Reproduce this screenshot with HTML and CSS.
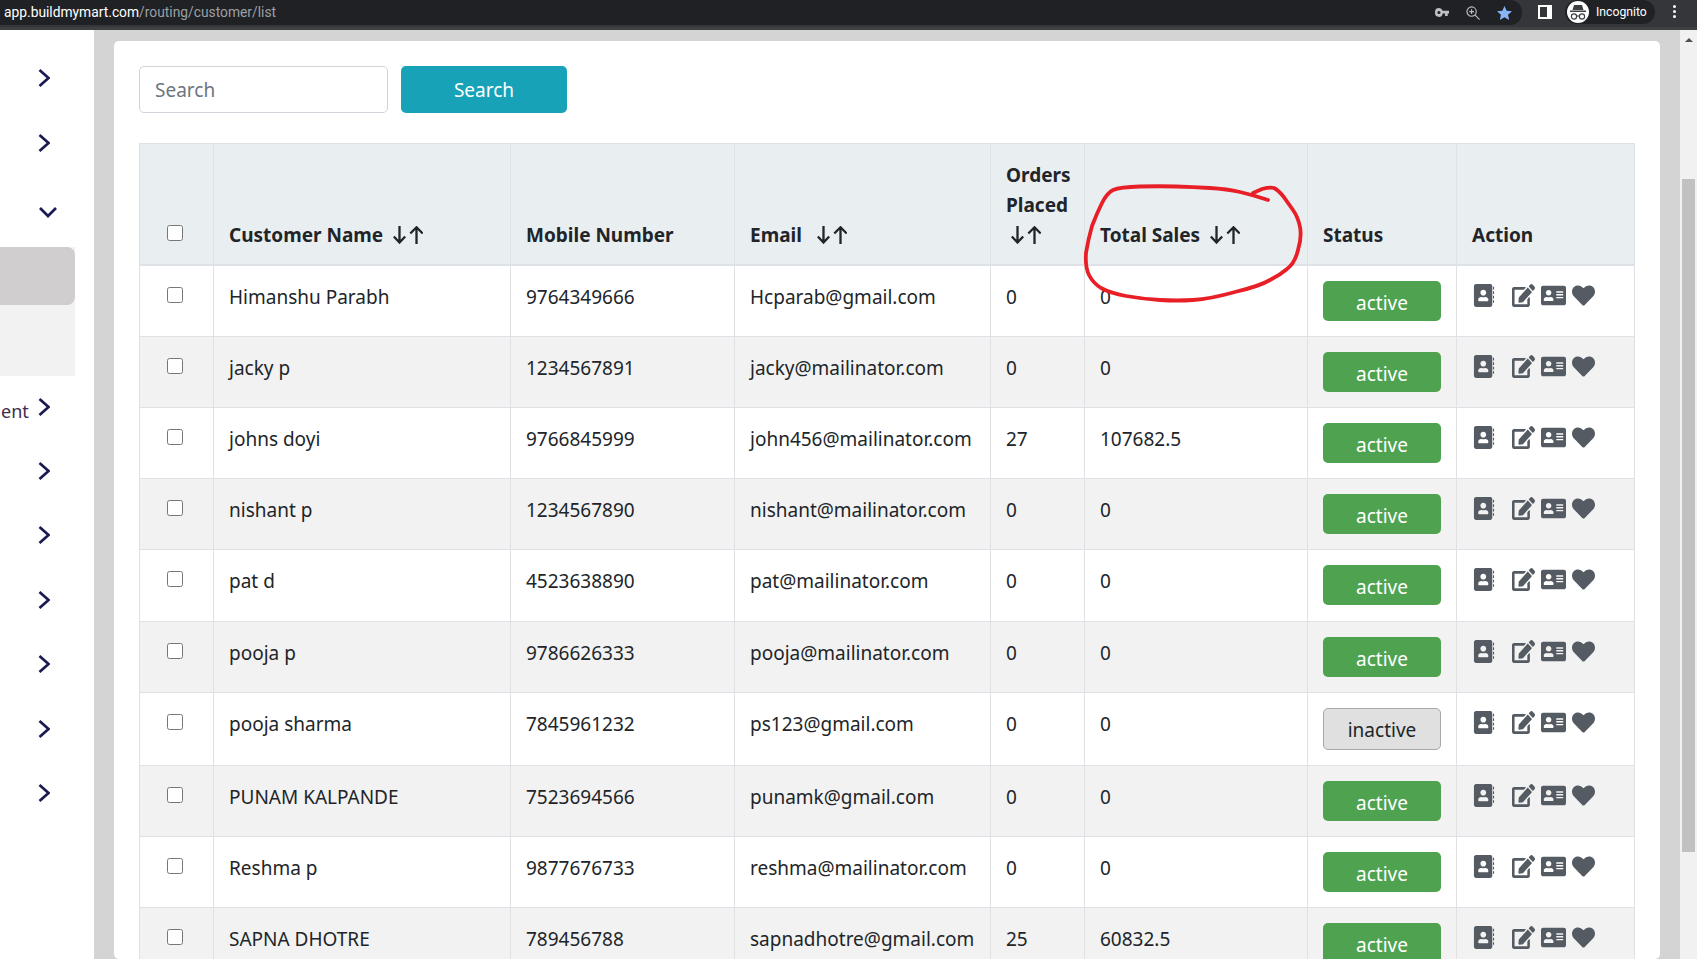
FILE: index.html
```html
<!DOCTYPE html>
<html lang="en">
<head>
    <meta charset="UTF-8">
    <title>Customer List</title>
    <link rel="stylesheet" href="styles.css">
</head>
<body>
    <svg class="icon-defs" aria-hidden="true">
        <symbol id="i-chevron" viewBox="0 0 12 18"><path d="M1.500 1 10.500 9 1.500 17" fill="none" stroke="currentColor" stroke-width="2.700"/></symbol>
        <symbol id="i-chevron-down" viewBox="0 0 18 12"><path d="M1 2 9 10 17 2" fill="none" stroke="currentColor" stroke-width="2.700"/></symbol>
        <symbol id="i-sort" viewBox="0 0 30 18"><path d="M6.500 0v16M.8 10.500 6.500 16.500 12.200 10.500M23.500 18V2M17.300 7.500 23.500 1.300 29.700 7.500" fill="none" stroke="currentColor" stroke-width="2.300"/></symbol>
        <symbol id="i-book" viewBox="0 0 448 512"><path d="M48 0h320c0 0 40 0 40 48v416c0 26.500-21.500 48-48 48H48c-26.500 0-48-21.500-48-48V48C0 21.500 21.500 0 48 0zm160 128c-35.300 0-64 28.700-64 64s28.700 64 64 64 64-28.700 64-64-28.700-64-64-64zm112 236.800v-19.200c0-31.800-30.100-57.600-67.200-57.600h-5c-12.300 5.100-25.700 8-39.800 8s-27.600-2.900-39.800-8h-5c-37.100 0-67.200 25.800-67.200 57.600v19.200c0 10.600 10 19.200 22.400 19.200h179.200c12.400 0 22.400-8.600 22.400-19.200z" fill-rule="evenodd"/><path d="M424 60h24v60h-24zM424 160h24v60h-24zM424 260h24v60h-24zM424 360h24v60h-24z"/></symbol>
        <symbol id="i-edit" viewBox="0 0 576 512" preserveAspectRatio="none"><path d="M402.600 83.200l90.200 90.200c3.800 3.800 3.800 10 0 13.800L274.400 405.600l-92.800 10.300c-12.400 1.400-22.900-9.100-21.500-21.500l10.300-92.800L388.800 83.200c3.800-3.800 10-3.800 13.800 0zm162-22.900l-48.800-48.800c-15.200-15.200-39.900-15.200-55.200 0l-35.400 35.400c-3.800 3.800-3.800 10 0 13.800l90.200 90.200c3.800 3.800 10 3.800 13.800 0l35.400-35.400c15.200-15.300 15.200-40 0-55.200zM384 346.200V448H64V128h229.800c3.200 0 6.200-1.300 8.500-3.500l40-40c7.600-7.600 2.200-20.500-8.500-20.500H48C21.500 64 0 85.500 0 112v352c0 26.500 21.500 48 48 48h352c26.500 0 48-21.500 48-48V306.200c0-10.700-12.900-16-20.500-8.500l-40 40c-2.200 2.300-3.500 5.300-3.500 8.500z"/></symbol>
        <symbol id="i-card" viewBox="0 0 576 512"><path d="M528 32H48C21.500 32 0 53.500 0 80v352c0 26.500 21.500 48 48 48h480c26.500 0 48-21.500 48-48V80c0-26.500-21.500-48-48-48zm-352 96c35.300 0 64 28.700 64 64s-28.700 64-64 64-64-28.700-64-64 28.700-64 64-64zm112 236.800c0 10.600-10 19.200-22.400 19.200H86.400C74 384 64 375.400 64 364.800v-19.200c0-31.800 30.100-57.600 67.200-57.600h5c12.300 5.100 25.700 8 39.800 8s27.600-2.900 39.800-8h5c37.100 0 67.200 25.800 67.200 57.600v19.200zM512 312c0 4.400-3.600 8-8 8H360c-4.400 0-8-3.600-8-8v-16c0-4.400 3.600-8 8-8h144c4.400 0 8 3.600 8 8v16zm0-64c0 4.400-3.600 8-8 8H360c-4.400 0-8-3.600-8-8v-16c0-4.400 3.600-8 8-8h144c4.400 0 8 3.600 8 8v16zm0-64c0 4.400-3.600 8-8 8H360c-4.400 0-8-3.600-8-8v-16c0-4.400 3.600-8 8-8h144c4.400 0 8 3.600 8 8v16z"/></symbol>
        <symbol id="i-heart" viewBox="0 0 512 512"><path d="M462.300 62.600C407.500 15.900 326 24.300 275.700 76.200L256 96.500l-19.700-20.300C186.100 24.300 104.500 15.900 49.700 62.600c-62.800 53.600-66.100 149.800-9.900 207.900l193.500 199.800c12.500 12.900 32.800 12.900 45.300 0l193.500-199.800c56.300-58.100 53-154.300-9.800-207.900z"/></symbol>
    </svg>

    <header class="topbar">
        <div class="omnibox">
            <div class="url"><span class="url-host">app.buildmymart.com</span>/routing/customer/list</div>
            <div class="omni-icons">
                <svg class="omni-icon" width="14" height="9" viewBox="0 0 16 10"><path d="M4.500 0a4.500 5 0 0 1 4.300 3H16v3h-1.500v3h-3V6H8.800a4.500 5 0 1 1-4.300-6zm0 3.200a1.800 1.800 0 1 0 0 3.600 1.800 1.800 0 0 0 0-3.600z" fill="#bdc1c6" fill-rule="evenodd"/></svg>
                <svg class="omni-icon" width="14" height="14" viewBox="0 0 15 15"><g fill="none" stroke="#bdc1c6" stroke-width="1.200"><circle cx="6" cy="6" r="5"/><path d="M9.800 9.800 14.500 14.500M3.500 6h5M6 3.500v5"/></g></svg>
                <svg class="omni-icon" width="15" height="14" viewBox="0 0 16 15"><path d="M8 0l2.300 5 5.700.6-4.200 3.700 1.200 5.700L8 12.100 3 15l1.200-5.700L0 5.600 5.700 5z" fill="#8ab4f8"/></svg>
            </div>
        </div>
        <div class="panel-icon"></div>
        <div class="profile">
            <span class="avatar">
                <svg width="18" height="16" viewBox="0 0 18 16"><path d="M3.500 6 5 1h8l1.500 5zM1 6.500h16V8H1z" fill="#3c4043"/><g fill="none" stroke="#3c4043" stroke-width="1.200"><circle cx="5" cy="12.500" r="2.600"/><circle cx="13" cy="12.500" r="2.600"/><path d="M7.500 12h3"/></g></svg>
            </span>
            <span class="profile-name">Incognito</span>
        </div>
        <div class="menu-dots"><i></i><i></i><i></i></div>
    </header>

    <div class="layout">
        <nav class="sidebar">
            <div class="nav-item"><svg class="chevron"><use href="#i-chevron"/></svg></div>
            <div class="nav-item"><svg class="chevron"><use href="#i-chevron"/></svg></div>
            <div class="nav-item nav-open"><svg class="chevron-down"><use href="#i-chevron-down"/></svg></div>
            <div class="submenu">
                <div class="sub-active"></div>
            </div>
            <div class="nav-item nav-label"><span class="nav-text">ent</span><svg class="chevron"><use href="#i-chevron"/></svg></div>
            <div class="nav-item"><svg class="chevron"><use href="#i-chevron"/></svg></div>
            <div class="nav-item"><svg class="chevron"><use href="#i-chevron"/></svg></div>
            <div class="nav-item"><svg class="chevron"><use href="#i-chevron"/></svg></div>
            <div class="nav-item"><svg class="chevron"><use href="#i-chevron"/></svg></div>
            <div class="nav-item"><svg class="chevron"><use href="#i-chevron"/></svg></div>
            <div class="nav-item"><svg class="chevron"><use href="#i-chevron"/></svg></div>
        </nav>

        <main class="content">
            <div class="card">
                <div class="search-row">
                    <input class="search-input" type="text" placeholder="Search">
                    <button class="search-button">Search</button>
                </div>
                <table class="customers">
                    <colgroup>
                        <col class="col-check"><col class="col-name"><col class="col-mobile"><col class="col-email">
                        <col class="col-orders"><col class="col-sales"><col class="col-status"><col class="col-action">
                    </colgroup>
                    <thead>
                        <tr>
                            <th><input type="checkbox"></th>
                            <th>Customer Name <svg class="sort"><use href="#i-sort"/></svg></th>
                            <th>Mobile Number</th>
                            <th>Email <svg class="sort sort-far"><use href="#i-sort"/></svg></th>
                            <th>Orders Placed <svg class="sort sort-wrapped"><use href="#i-sort"/></svg></th>
                            <th>Total Sales <svg class="sort"><use href="#i-sort"/></svg></th>
                            <th>Status</th>
                            <th>Action</th>
                        </tr>
                    </thead>
                    <tbody>
                        <tr>
                            <td><input type="checkbox"></td>
                            <td>Himanshu Parabh</td><td>9764349666</td><td>Hcparab@gmail.com</td><td>0</td><td>0</td>
                            <td><button class="status">active</button></td>
                            <td><div class="actions"><svg class="action-book"><use href="#i-book"/></svg><svg class="action-edit"><use href="#i-edit"/></svg><svg class="action-card"><use href="#i-card"/></svg><svg class="action-heart"><use href="#i-heart"/></svg></div></td>
                        </tr>
                        <tr>
                            <td><input type="checkbox"></td>
                            <td>jacky p</td><td>1234567891</td><td>jacky@mailinator.com</td><td>0</td><td>0</td>
                            <td><button class="status">active</button></td>
                            <td><div class="actions"><svg class="action-book"><use href="#i-book"/></svg><svg class="action-edit"><use href="#i-edit"/></svg><svg class="action-card"><use href="#i-card"/></svg><svg class="action-heart"><use href="#i-heart"/></svg></div></td>
                        </tr>
                        <tr>
                            <td><input type="checkbox"></td>
                            <td>johns doyi</td><td>9766845999</td><td>john456@mailinator.com</td><td>27</td><td>107682.5</td>
                            <td><button class="status">active</button></td>
                            <td><div class="actions"><svg class="action-book"><use href="#i-book"/></svg><svg class="action-edit"><use href="#i-edit"/></svg><svg class="action-card"><use href="#i-card"/></svg><svg class="action-heart"><use href="#i-heart"/></svg></div></td>
                        </tr>
                        <tr>
                            <td><input type="checkbox"></td>
                            <td>nishant p</td><td>1234567890</td><td>nishant@mailinator.com</td><td>0</td><td>0</td>
                            <td><button class="status">active</button></td>
                            <td><div class="actions"><svg class="action-book"><use href="#i-book"/></svg><svg class="action-edit"><use href="#i-edit"/></svg><svg class="action-card"><use href="#i-card"/></svg><svg class="action-heart"><use href="#i-heart"/></svg></div></td>
                        </tr>
                        <tr>
                            <td><input type="checkbox"></td>
                            <td>pat d</td><td>4523638890</td><td>pat@mailinator.com</td><td>0</td><td>0</td>
                            <td><button class="status">active</button></td>
                            <td><div class="actions"><svg class="action-book"><use href="#i-book"/></svg><svg class="action-edit"><use href="#i-edit"/></svg><svg class="action-card"><use href="#i-card"/></svg><svg class="action-heart"><use href="#i-heart"/></svg></div></td>
                        </tr>
                        <tr>
                            <td><input type="checkbox"></td>
                            <td>pooja p</td><td>9786626333</td><td>pooja@mailinator.com</td><td>0</td><td>0</td>
                            <td><button class="status">active</button></td>
                            <td><div class="actions"><svg class="action-book"><use href="#i-book"/></svg><svg class="action-edit"><use href="#i-edit"/></svg><svg class="action-card"><use href="#i-card"/></svg><svg class="action-heart"><use href="#i-heart"/></svg></div></td>
                        </tr>
                        <tr>
                            <td><input type="checkbox"></td>
                            <td>pooja sharma</td><td>7845961232</td><td>ps123@gmail.com</td><td>0</td><td>0</td>
                            <td><button class="status status-off">inactive</button></td>
                            <td><div class="actions"><svg class="action-book"><use href="#i-book"/></svg><svg class="action-edit"><use href="#i-edit"/></svg><svg class="action-card"><use href="#i-card"/></svg><svg class="action-heart"><use href="#i-heart"/></svg></div></td>
                        </tr>
                        <tr>
                            <td><input type="checkbox"></td>
                            <td>PUNAM KALPANDE</td><td>7523694566</td><td>punamk@gmail.com</td><td>0</td><td>0</td>
                            <td><button class="status">active</button></td>
                            <td><div class="actions"><svg class="action-book"><use href="#i-book"/></svg><svg class="action-edit"><use href="#i-edit"/></svg><svg class="action-card"><use href="#i-card"/></svg><svg class="action-heart"><use href="#i-heart"/></svg></div></td>
                        </tr>
                        <tr>
                            <td><input type="checkbox"></td>
                            <td>Reshma p</td><td>9877676733</td><td>reshma@mailinator.com</td><td>0</td><td>0</td>
                            <td><button class="status">active</button></td>
                            <td><div class="actions"><svg class="action-book"><use href="#i-book"/></svg><svg class="action-edit"><use href="#i-edit"/></svg><svg class="action-card"><use href="#i-card"/></svg><svg class="action-heart"><use href="#i-heart"/></svg></div></td>
                        </tr>
                        <tr>
                            <td><input type="checkbox"></td>
                            <td>SAPNA DHOTRE</td><td>789456788</td><td>sapnadhotre@gmail.com</td><td>25</td><td>60832.5</td>
                            <td><button class="status">active</button></td>
                            <td><div class="actions"><svg class="action-book"><use href="#i-book"/></svg><svg class="action-edit"><use href="#i-edit"/></svg><svg class="action-card"><use href="#i-card"/></svg><svg class="action-heart"><use href="#i-heart"/></svg></div></td>
                        </tr>
                    </tbody>
                </table>
            </div>
        </main>

        <div class="scrollbar">
            <span class="scroll-up"></span>
            <div class="scroll-thumb"></div>
        </div>
    </div>

    <svg class="scribble" viewBox="0 0 1697 959" aria-hidden="true">
        <path d="M1268 200 Q1253 195 1240 192 Q1227 189 1210 188 Q1193 187 1176 186.500 Q1160 186 1140 186.500 Q1120 187 1113 190 Q1107 193 1102 203 Q1097 213 1092 226 Q1088 240 1086 253 Q1085 267 1089 275 Q1093 283 1101 288 Q1110 293 1126 296 Q1143 299 1160 300 Q1177 301 1193 300 Q1210 299 1235 292 Q1260 286 1270 280 Q1280 275 1287 269 Q1295 263 1298 250 Q1302 237 1300 227 Q1298 217 1293 210 Q1288 203 1283 196 Q1278 190 1274 188 Q1270 187 1262 189 L1253 193"/>
    </svg>
</body>
</html>
```

FILE: styles.css
```css
* {
    box-sizing: border-box;
}

html, body {
    margin: 0;
    height: 100%;
    overflow: hidden;
}

body {
    background-color: #d4d4d4;
    color: #212529;
    font-family: 'Noto Sans', sans-serif;
    font-size: 19px;
    display: flex;
    flex-direction: column;
}

.icon-defs {
    display: none;
}

/* browser chrome */
.topbar {
    height: 30px;
    flex-shrink: 0;
    background-color: #35363a;
    border-bottom: 3px solid #3f4043;
    display: flex;
    align-items: flex-start;
    color: #fff;
    font-family: Roboto, sans-serif;
}

.omnibox {
    width: 1522px;
    height: 25px;
    background-color: #202124;
    border-radius: 0 12px 12px 0;
    display: flex;
    align-items: center;
    justify-content: space-between;
    padding: 0 10px 0 4px;
}

.url {
    font-size: 13.800px;
    color: #9aa0a6;
    padding-bottom: 2px;
}

.url-host {
    color: #fff;
}

.omni-icons {
    display: flex;
    align-items: center;
    gap: 17px;
}

.panel-icon {
    width: 14px;
    height: 14px;
    margin: 5px 0 0 16px;
    background-color: #35363a;
    border: 2px solid #fff;
    border-right-width: 5px;
}

.profile {
    width: 90px;
    height: 24px;
    margin-left: 13px;
    background-color: #202124;
    border-radius: 12px;
    display: flex;
    align-items: center;
    gap: 7px;
    padding-left: 2px;
}

.avatar {
    width: 22px;
    height: 22px;
    border-radius: 50%;
    background-color: #fff;
    display: flex;
    align-items: center;
    justify-content: center;
}

.profile-name {
    font-size: 12.200px;
}

.menu-dots {
    margin: 5px 0 0 18px;
    display: flex;
    flex-direction: column;
    gap: 2px;
}

.menu-dots i {
    width: 3px;
    height: 3px;
    border-radius: 50%;
    background-color: #fff;
}

.layout {
    flex: 1;
    min-height: 0;
    display: flex;
}

/* left menu, cut off by the screenshot */
.sidebar {
    width: 94px;
    flex-shrink: 0;
    background-color: #fff;
    color: #1c1a55;
    padding-top: 16px;
    overflow: hidden;
}

.nav-item {
    height: 64.400px;
    display: flex;
    align-items: center;
    justify-content: flex-end;
    padding-right: 44px;
}

.nav-open {
    margin-top: 5px;
    padding-right: 37px;
    padding-bottom: 3px;
    height: 67px;
}

.chevron {
    width: 12px;
    height: 18px;
}

.chevron-down {
    width: 18px;
    height: 12px;
}

.submenu {
    width: 75px;
    height: 129px;
    background-color: #f2f2f2;
}

.sub-active {
    height: 58px;
    background-color: #d0cece;
    border-radius: 0 8px 8px 0;
}

.nav-label {
    height: 64px;
    margin-top: -1px;
    justify-content: space-between;
}

.nav-text {
    color: #3d2c4e;
    font-size: 18px;
    padding: 8px 0 0 1px;
}

.content {
    flex: 1;
    min-width: 0;
    padding: 11px 20px 0;
    overflow: hidden;
}

.card {
    background-color: #fff;
    border-radius: 5px;
    padding: 25px;
    height: 100%;
    overflow: hidden;
}

.search-row {
    display: flex;
    gap: 13px;
    margin-bottom: 30px;
}

.search-input {
    width: 249px;
    height: 47px;
    padding: 0 15px;
    border: 1px solid #ced4da;
    border-radius: 5px;
    font-family: inherit;
    font-size: 19px;
    color: #495057;
}

.search-input::placeholder {
    color: #6c757d;
}

.search-button {
    width: 166px;
    height: 47px;
    background-color: #17a2b8;
    border: none;
    border-radius: 5px;
    color: #fff;
    font-family: inherit;
    font-size: 19px;
}

.customers {
    width: 1495px;
    table-layout: fixed;
    border-collapse: collapse;
}

.col-check { width: 74px; }
.col-name { width: 297px; }
.col-mobile { width: 224px; }
.col-email { width: 256px; }
.col-orders { width: 94px; }
.col-sales { width: 223px; }
.col-status { width: 149px; }
.col-action { width: 178px; }

.customers th,
.customers td {
    border: 1px solid #dee2e6;
    padding: 15px;
    vertical-align: top;
    text-align: left;
}

.customers th {
    background-color: #e9eef1;
    border-bottom-width: 2px;
    padding-top: 16px;
    padding-bottom: 14px;
    vertical-align: bottom;
    font-weight: 700;
    line-height: 30px;
}

.customers tbody tr:nth-child(even) td {
    background-color: #f2f2f2;
}

.customers td {
    line-height: 32px;
    height: 71.150px;
}

.customers input[type="checkbox"] {
    width: 16px;
    height: 16px;
    margin: 6px 0 0 12px;
    display: block;
}

.customers th input[type="checkbox"] {
    margin: 0 0 9px 12px;
}

.sort {
    width: 30px;
    height: 18px;
    margin-left: 5px;
    vertical-align: -2px;
}

.sort-far {
    margin-left: 10px;
}

.sort-wrapped {
    display: block;
    margin: 0 0 0 5px;
    height: 30px;
    padding: 6px 0;
}

.status {
    display: block;
    width: 118px;
    height: 40px;
    padding: 4px 0 0;
    text-align: center;
    border: none;
    border-radius: 5px;
    font-family: inherit;
    font-size: 19px;
    background-color: #4fa350;
    color: #fff;
}

.status-off {
    height: 42px;
    padding-top: 3px;
    background-color: #e0e0e0;
    border: 1px solid #a8a8a8;
    color: #212529;
}

.actions {
    display: flex;
    align-items: flex-start;
    color: #555b63;
    margin-top: 3px;
}

.action-book { width: 22px; height: 23px; margin-left: 1px; }
.action-edit { width: 23px; height: 23px; margin-left: 17px; }
.action-card { width: 25px; height: 23px; margin-left: 6px; }
.action-heart { width: 23px; height: 23px; margin-left: 6px; }

.actions svg {
    fill: currentColor;
}

.scrollbar {
    width: 17px;
    flex-shrink: 0;
    background-color: #f1f1f1;
    padding: 5px 2px 0;
}

.scroll-up {
    display: block;
    width: 0;
    height: 0;
    margin: 3px auto 0;
    border-left: 4px solid transparent;
    border-right: 4px solid transparent;
    border-bottom: 4px solid #505050;
}

.scroll-thumb {
    height: 673px;
    margin-top: 137px;
    background-color: #c1c1c1;
}

/* hand drawn circle on the screenshot */
.scribble {
    position: absolute;
    top: 0;
    left: 0;
    width: 1697px;
    height: 959px;
    pointer-events: none;
    fill: none;
    stroke: #e81f27;
    stroke-width: 3.800;
    stroke-linecap: round;
}
```
